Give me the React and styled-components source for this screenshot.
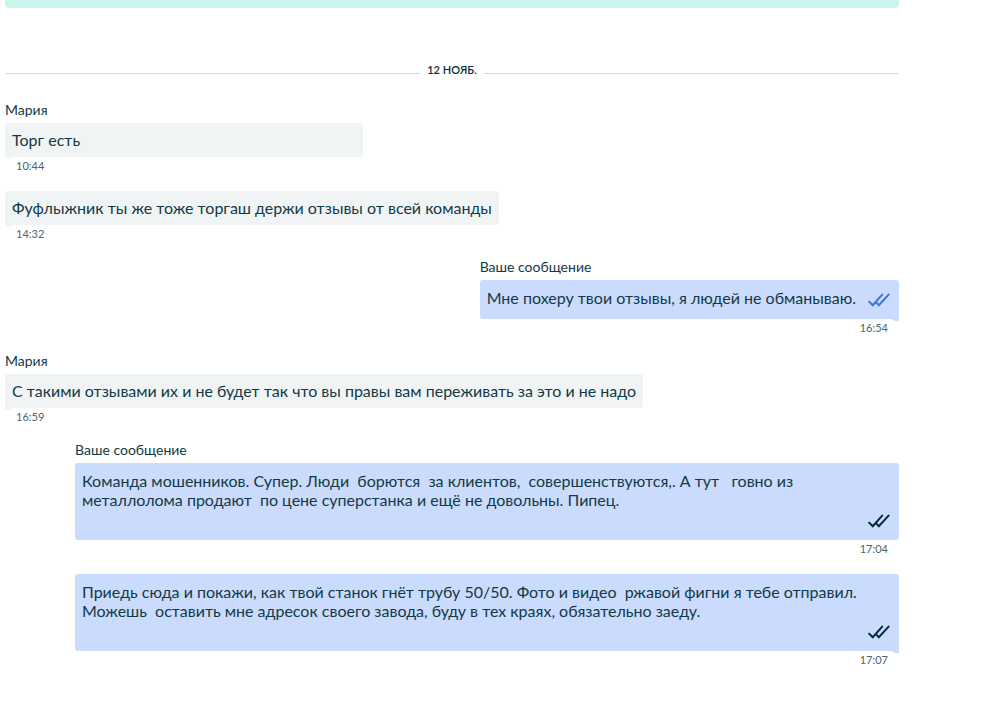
import React from "react";
import styled, { createGlobalStyle } from "styled-components";

const messages = [
    { id: 1, sender: "Мария", text: "Торг есть", time: "10:44", tail: true },
    {
        id: 2,
        text: "Фуфлыжник ты же тоже торгаш держи отзывы от всей команды",
        time: "14:32",
        tail: true,
    },
    {
        id: 3,
        own: true,
        sender: "Ваше сообщение",
        text: "Мне похеру твои отзывы, я людей не обманываю.",
        time: "16:54",
        read: true,
        tail: true,
    },
    {
        id: 4,
        sender: "Мария",
        text: "С такими отзывами их и не будет так что вы правы вам переживать за это и не надо",
        time: "16:59",
        tail: true,
    },
    {
        id: 5,
        own: true,
        long: true,
        sender: "Ваше сообщение",
        text: "Команда мошенников. Супер. Люди  борются  за клиентов,  совершенствуются,. А тут   говно из\nметаллолома продают  по цене суперстанка и ещё не довольны. Пипец.",
        time: "17:04",
    },
    {
        id: 6,
        own: true,
        long: true,
        text: "Приедь сюда и покажи, как твой станок гнёт трубу 50/50. Фото и видео  ржавой фигни я тебе отправил.\nМожешь  оставить мне адресок своего завода, буду в тех краях, обязательно заеду.",
        time: "17:07",
        tail: true,
    },
];

const CheckIcon = ({ read }) => (
    <CheckSvg viewBox="0 0 22 14" $read={read} aria-hidden="true">
        <path d="M1.2 8.8L4.8 12.2L14.2 1.6" />
        <path d="M8.4 9.6L10.8 12.2L20.6 1.6" />
    </CheckSvg>
);

const App = () => {
    const renderMessage = (item) => (
        <Message key={item.id} $own={item.own} $long={item.long}>
            {item.sender && <Sender>{item.sender}</Sender>}
            <Bubble $own={item.own} $long={item.long} $tail={item.tail}>
                <Text>{item.text}</Text>
                {item.own && (
                    <Status>
                        <CheckIcon read={item.read} />
                    </Status>
                )}
            </Bubble>
            <Time $own={item.own}>{item.time}</Time>
        </Message>
    );

    return (
        <Chat>
            <GlobalStyle />
            <Banner />
            <DateDivider>
                <DateLabel>12 НОЯБ.</DateLabel>
            </DateDivider>
            <MessageList>{messages.map(renderMessage)}</MessageList>
        </Chat>
    );
};

const GlobalStyle = createGlobalStyle`
    body {
        margin: 0;
        background: #fefffe;
        color: #123a45;
        font-family: Lato, "Open Sans", sans-serif;
    }
`;

const Chat = styled.main`
    padding: 0 101px 32px 5px;
`;

const Banner = styled.div`
    height: 8px;
    border-radius: 0 0 4px 4px;
    background: #c9f6ec;
`;

const DateDivider = styled.div`
    display: flex;
    align-items: center;
    gap: 7px;
    margin-top: 54px;

    &::before,
    &::after {
        content: "";
        flex: 1;
        height: 1px;
        margin-top: 6px;
        background: #d3dbdd;
    }
`;

const DateLabel = styled.span`
    color: #0b2f38;
    font-size: 11px;
    font-weight: 600;
    line-height: 16px;
`;

const MessageList = styled.div`
    display: flex;
    flex-direction: column;
    gap: 17px;
    margin-top: 24px;
`;

const Message = styled.article`
    display: flex;
    flex-direction: column;
    align-self: ${(props) => (props.$own ? "flex-end" : "flex-start")};
    box-sizing: border-box;
    width: ${(props) => (props.$long ? "100%" : "auto")};
    min-width: 40%;
    max-width: calc(100% - 70px);
`;

const Sender = styled.span`
    margin-bottom: 5px;
    font-size: 14px;
    line-height: 16px;
`;

const Bubble = styled.div`
    position: relative;
    display: flex;
    flex-direction: ${(props) => (props.$long ? "column" : "row")};
    justify-content: space-between;
    gap: ${(props) => (props.$long ? 0 : "12px")};
    padding: ${(props) => (props.$own ? "8px 9px 12px 7px" : "7px 7px 8px")};
    border-radius: 3px;
    background: ${(props) => (props.$own ? "#cbdbfd" : "#f1f4f5")};

    &::after {
        content: "";
        display: ${(props) => (props.$tail ? "block" : "none")};
        position: absolute;
        bottom: -2px;
        ${(props) => (props.$own ? "right: 0;" : "left: 0;")}
        width: 10px;
        height: 6px;
        background: inherit;
        clip-path: ${(props) =>
            props.$own
                ? "polygon(0 50%, 100% 0, 100% 100%, 60% 100%)"
                : "polygon(0 0, 100% 50%, 40% 100%, 0 100%)"};
    }
`;

const Text = styled.p`
    margin: 0;
    font-size: 16px;
    line-height: 19px;
    white-space: pre-wrap;
`;

const Status = styled.span`
    display: flex;
    align-items: flex-end;
    justify-content: flex-end;
    height: 19px;
`;

const CheckSvg = styled.svg`
    width: 22px;
    height: 14px;
    fill: none;
    stroke: ${(props) => (props.$read ? "#3f73d8" : "#062c38")};
    stroke-width: 2;
    stroke-linecap: round;
`;

const Time = styled.time`
    align-self: ${(props) => (props.$own ? "flex-end" : "flex-start")};
    margin: 1px 11px 0;
    color: #4d656c;
    font-size: 11px;
    line-height: 16px;
`;

export default App;
